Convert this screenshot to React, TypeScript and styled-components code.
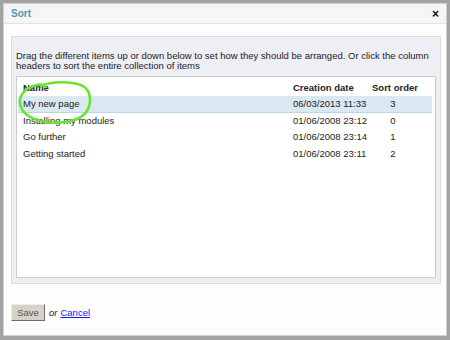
import React from 'react';
import styled, { createGlobalStyle } from 'styled-components';

const GlobalStyle = createGlobalStyle`
  html, body { margin: 0; padding: 0; background: #a3a3a3; }
  body { font-family: "Liberation Sans", Arial, sans-serif; font-size: 9.5px; color: #222; }
`;

type Item = { name: string; created: string; order: number };

const items: Item[] = [
  { name: 'My new page', created: '06/03/2013 11:33', order: 3 },
  { name: 'Installing my modules', created: '01/06/2008 23:12', order: 0 },
  { name: 'Go further', created: '01/06/2008 23:14', order: 1 },
  { name: 'Getting started', created: '01/06/2008 23:11', order: 2 },
];

export default function App() {
  return (
    <>
      <GlobalStyle />
      <Screen>
        <Dialog>
          <TitleBar>
            <Title>Sort</Title>
            <Close>×</Close>
          </TitleBar>
          <Body>
            <Panel>
              <Intro>
                Drag the different items up or down below to set how they should be arranged. Or click the column
                headers to sort the entire collection of items
              </Intro>
              <TableBox>
                <Grid>
                  <HeadCell>Name</HeadCell>
                  <HeadCell>Creation date</HeadCell>
                  <HeadCell>Sort order</HeadCell>
                  <HeadCell />
                  {items.map((it, i) => (
                    <Row key={it.name} $selected={i === 0}>
                      <Cell>{it.name}</Cell>
                      <Cell>{it.created}</Cell>
                      <Cell $center>{it.order}</Cell>
                      <Cell />
                    </Row>
                  ))}
                </Grid>
                <Scribble viewBox="0 0 76 46" width="76" height="46">
                  <path
                    d="M24 6 C34 1 56 1 66 6 C74 11 75 22 70 31 C64 41 46 44 30 42 C14 40 4 33 3 23 C2 14 10 7 20 5 C24 4 27 5 28 7"
                    fill="none"
                    stroke="#66e62a"
                    strokeWidth="2.6"
                    strokeLinecap="round"
                  />
                </Scribble>
              </TableBox>
            </Panel>
          </Body>
          <Footer>
            <SaveButton>Save</SaveButton>
            <Or>or</Or>
            <CancelLink href="#">Cancel</CancelLink>
          </Footer>
        </Dialog>
      </Screen>
    </>
  );
}

const Screen = styled.div`
  width: 450px;
  height: 340px;
  padding: 3px 3px 4px 3px;
  box-sizing: border-box;
`;

const Dialog = styled.div`
  height: 333px;
  background: #fdfdfc;
  border: 1px solid #d0d0d0;
  box-sizing: border-box;
  display: flex;
  flex-direction: column;
`;

const TitleBar = styled.div`
  height: 19px;
  display: flex;
  align-items: center;
  justify-content: space-between;
  padding: 0 7px 0 7px;
  border-bottom: 1px solid #e2e2e2;
  background-color: #fafafa;
  background-image: repeating-conic-gradient(#efefef 0% 25%, #fcfcfc 0% 50%);
  background-size: 2px 2px;
`;

const Title = styled.span`
  color: #4f95b4;
  font-weight: bold;
  font-size: 10px;
`;

const Close = styled.span`
  font-weight: bold;
  font-size: 12px;
  color: #111;
  line-height: 1;
`;

const Body = styled.div`
  flex: 1;
  padding: 12px 5px 0 7px;
`;

const Panel = styled.div`
  height: 248px;
  box-sizing: border-box;
  background: #eeeef5;
  border: 1px solid #dcdcdc;
  padding: 14px 4px 5px 4px;
  display: flex;
  flex-direction: column;
`;

const Intro = styled.p`
  margin: 0 0 6px 0;
  line-height: 9.5px;
  white-space: pre-line;
`;

const TableBox = styled.div`
  position: relative;
  flex: 1;
  background: #fff;
  border: 1px solid #cccccc;
  padding: 3px 3px 0 1px;
`;

const Grid = styled.div`
  display: grid;
  grid-template-columns: 275px 79px 42px 1fr;
`;

const HeadCell = styled.div`
  font-weight: bold;
  height: 16px;
  line-height: 16px;
  white-space: nowrap;
  &:first-child { padding-left: 5px; }
`;

const Row = styled.div<{ $selected?: boolean }>`
  display: contents;
  & > div {
    background: ${(p) => (p.$selected ? '#d9e8f1' : 'transparent')};
    ${(p) => (p.$selected ? 'border-bottom: 1px solid #bdd5e4;' : '')}
  }
  & > div:first-child { padding-left: 5px; }
`;

const Cell = styled.div<{ $center?: boolean }>`
  box-sizing: border-box;
  height: 16.7px;
  line-height: 16px;
  white-space: nowrap;
  text-align: ${(p) => (p.$center ? 'center' : 'left')};
`;

const Scribble = styled.svg`
  position: absolute;
  left: 0px;
  top: 3px;
  pointer-events: none;
`;

const Footer = styled.div`
  height: 46px;
  display: flex;
  align-items: center;
  padding: 0 7px;
  gap: 3px;
`;

const SaveButton = styled.button`
  width: 34px;
  height: 17px;
  padding: 0;
  font-family: inherit;
  font-size: 9.5px;
  color: #555;
  background: #d6d2ca;
  border: 1px solid;
  border-color: #eeeeee #6e6e6e #6e6e6e #eeeeee;
`;

const Or = styled.em`
  margin-left: 1px;
`;

const CancelLink = styled.a`
  color: #1a1ae8;
  text-decoration: underline;
`;
